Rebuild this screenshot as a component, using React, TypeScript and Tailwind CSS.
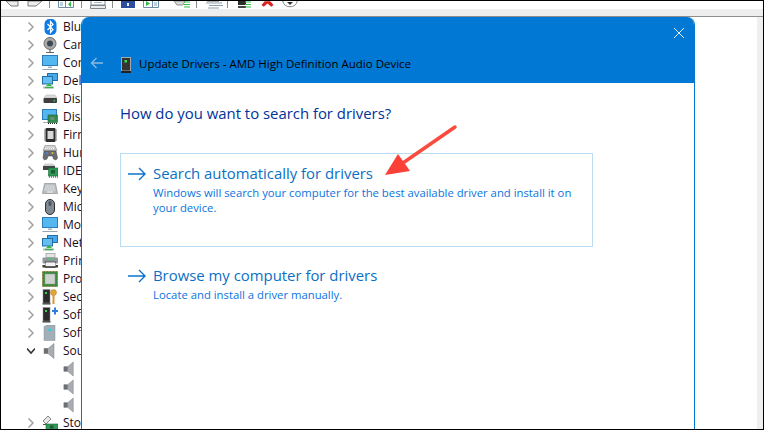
import type { ReactNode } from "react";

const FONT = "font-['Open_Sans','Noto_Sans',sans-serif]";

type IconName =
  | "bluetooth"
  | "camera"
  | "monitor"
  | "network"
  | "disk"
  | "display"
  | "firmware"
  | "hid"
  | "ide"
  | "keyboard"
  | "mouse"
  | "printer"
  | "cpu"
  | "security"
  | "softcomp"
  | "softdev"
  | "speaker"
  | "storage";

type Row = {
  label?: string;
  icon: IconName;
  open?: boolean;
  child?: boolean;
};

const rows: Row[] = [
  { label: "Bluetooth", icon: "bluetooth" },
  { label: "Cameras", icon: "camera" },
  { label: "Computer", icon: "monitor" },
  { label: "Delivery", icon: "network" },
  { label: "Disk drives", icon: "disk" },
  { label: "Display", icon: "display" },
  { label: "Firmware", icon: "firmware" },
  { label: "Human", icon: "hid" },
  { label: "IDE ATA", icon: "ide" },
  { label: "Keyboards", icon: "keyboard" },
  { label: "Mice", icon: "mouse" },
  { label: "Monitors", icon: "monitor" },
  { label: "Network", icon: "network" },
  { label: "Print", icon: "printer" },
  { label: "Processors", icon: "cpu" },
  { label: "Security", icon: "security" },
  { label: "Software", icon: "softcomp" },
  { label: "Software", icon: "softdev" },
  { label: "Sound", icon: "speaker", open: true },
  { icon: "speaker", child: true },
  { icon: "speaker", child: true },
  { icon: "speaker", child: true },
  { label: "Storage", icon: "storage" },
];

const treeIcons: Record<IconName, ReactNode> = {
  bluetooth: (
    <>
      <rect x="2.5" y="0" width="12" height="16" rx="5" fill="#0a7be8" />
      <path d="M5.5 5 11 10.5 8.5 13.5V2.5L11 5.5 5.5 11" fill="none" stroke="#fff" strokeWidth="1.2" />
    </>
  ),
  camera: (
    <>
      <circle cx="8" cy="6.5" r="6" fill="#a9a9a9" stroke="#6e6e6e" />
      <circle cx="8" cy="6.5" r="3" fill="#3a4a55" />
      <path d="M8 13v2M4 15.5h8" stroke="#666" strokeWidth="1.2" />
    </>
  ),
  monitor: (
    <>
      <rect x="0.5" y="0.5" width="15" height="10" fill="#55b7f0" stroke="#2b7fb8" />
      <path d="M6 11.5h4v1.5H6z" fill="#9fb4c2" />
      <path d="M0.5 14.5h15" stroke="#9aa4ad" />
    </>
  ),
  network: (
    <>
      <rect x="5.5" y="0.5" width="10" height="7" fill="#4aa8e8" stroke="#1f6fa8" />
      <rect x="0.5" y="3.5" width="10" height="7.5" fill="#66bdf2" stroke="#1f6fa8" />
      <path d="M1 14.5h11" stroke="#b5bcc2" strokeWidth="2" />
      <path d="M4 13h6l-3-3z" fill="#35b54a" />
      <path d="M3 14.5h8" stroke="#35b54a" strokeWidth="1.4" />
    </>
  ),
  disk: (
    <>
      <path d="M2 7 4 4h9l2 3z" fill="#dcdcdc" stroke="#aaa" strokeWidth="0.5" />
      <rect x="1.5" y="7" width="13.5" height="5" rx="1" fill="#3e3e3e" />
      <rect x="11.5" y="8.8" width="1.6" height="1.6" fill="#37d04f" />
    </>
  ),
  display: (
    <>
      <rect x="0.5" y="0.5" width="14" height="10" fill="#55b7f0" stroke="#2b7fb8" />
      <path d="M1 13.5h7" stroke="#a8b0b6" />
      <rect x="6" y="6" width="9.5" height="7.5" fill="#2f8a4e" stroke="#1d5e33" strokeWidth="0.6" />
      <rect x="8.5" y="8" width="4" height="3" fill="#6b8f70" />
      <path d="M6 14.5h9.5" stroke="#222" strokeDasharray="1 1" />
    </>
  ),
  firmware: (
    <>
      <rect x="3.5" y="1" width="10" height="14" rx="1" fill="#2e2e2e" />
      <rect x="5.5" y="4" width="6" height="8" fill="#d9d9d9" />
      <path d="M2 3h1.5M2 5h1.5M2 7h1.5M2 9h1.5M2 11h1.5M2 13h1.5M13.5 3H15M13.5 5H15M13.5 7H15M13.5 9H15M13.5 11H15M13.5 13H15" stroke="#444" strokeWidth="0.8" />
    </>
  ),
  hid: (
    <>
      <path d="M3 0.5h10l2 5H1z" fill="#c8c8c8" stroke="#8a8a8a" strokeWidth="0.6" />
      <path d="M3.5 2h9M3 3.5h10" stroke="#f2f2f2" strokeDasharray="1 1" />
      <path d="M2 6h12l1.5 7-1.5 2-2.5-1-1-3H6l-1 3-2.5 1L1 13z" fill="#6b6b72" stroke="#3f3f45" strokeWidth="0.5" />
      <circle cx="5" cy="8" r="1" fill="#3c8fe0" />
      <circle cx="10.5" cy="8" r="1" fill="#e0c23c" />
    </>
  ),
  ide: (
    <>
      <path d="M1.5 3 3 1h8l1.5 2z" fill="#dcdcdc" stroke="#aaa" strokeWidth="0.5" />
      <rect x="1" y="3" width="12" height="4" fill="#454545" />
      <rect x="6.5" y="5" width="9.5" height="8" fill="#2f9a55" stroke="#1d6a38" strokeWidth="0.6" />
      <rect x="9" y="7" width="4" height="3.5" fill="#1f5b36" />
      <path d="M7 14h9" stroke="#222" strokeDasharray="1 1" />
    </>
  ),
  keyboard: (
    <>
      <path d="M2.5 2.5h11l2 10H0.5z" fill="#b9bcc0" stroke="#83878c" strokeWidth="0.6" />
      <path d="M3.5 5h9M3 7h10M2.5 9h11" stroke="#f4f4f4" strokeDasharray="1 0.6" />
      <path d="M5 11h6" stroke="#f4f4f4" />
    </>
  ),
  mouse: (
    <>
      <rect x="3.5" y="0.5" width="9" height="15" rx="4.5" fill="#7f8a94" stroke="#2e2e2e" />
      <rect x="6.5" y="2" width="3" height="5" rx="1.5" fill="#4d565e" />
    </>
  ),
  printer: (
    <>
      <rect x="4" y="0.5" width="9" height="4" fill="#e4e4e4" stroke="#888" strokeWidth="0.6" />
      <rect x="0.5" y="4.5" width="15.5" height="6" rx="1" fill="#8f969c" />
      <rect x="6" y="5.5" width="5" height="1" fill="#3bcf6b" />
      <rect x="3.5" y="9" width="10" height="5.5" fill="#fff" stroke="#333" strokeWidth="0.7" />
      <rect x="0.5" y="12" width="15.5" height="2.5" fill="#3a3a3a" />
      <rect x="3.5" y="10" width="10" height="3.2" fill="#f4f4f4" />
    </>
  ),
  cpu: (
    <>
      <rect x="0.5" y="0.5" width="15" height="15" fill="#3b8a3f" stroke="#8a7a35" strokeDasharray="1 0.5" />
      <rect x="3" y="3" width="10" height="10" fill="#cfd3d0" stroke="#8f9a90" strokeWidth="0.5" />
    </>
  ),
  security: (
    <>
      <rect x="1" y="0.5" width="7" height="13.5" fill="#2b2b2b" stroke="#8a8a8a" strokeWidth="0.5" />
      <rect x="3" y="3" width="2" height="2" fill="#37d04f" />
      <rect x="0.5" y="14" width="8" height="1.6" fill="#555" />
      <circle cx="11.5" cy="3.5" r="3" fill="#e0a63a" stroke="#b57d1c" strokeWidth="0.5" />
      <path d="M11.5 5.5v9.5" stroke="#d9992c" strokeWidth="2" />
    </>
  ),
  softcomp: (
    <>
      <rect x="1" y="0.5" width="7" height="13.5" fill="#2b2b2b" stroke="#8a8a8a" strokeWidth="0.5" />
      <rect x="3" y="3" width="2" height="2" fill="#37d04f" />
      <rect x="0.5" y="14" width="8" height="1.6" fill="#555" />
      <path d="M10 3h2V0.5h2V3h2v2h-2v2.5h-2V5h-2z" fill="#2f7fd6" />
    </>
  ),
  softdev: (
    <>
      <path d="M2 1.5 5 0h8v15.5H2z" fill="#a3afb8" stroke="#8a959e" strokeWidth="0.5" />
      <rect x="6.5" y="3.5" width="2.5" height="2.5" fill="#2fd0e6" />
    </>
  ),
  speaker: (
    <>
      <path d="M2 5.5h4L12 0.5v15L6 10.5H2z" fill="#a9adb1" stroke="#7b7f83" strokeWidth="0.5" />
      <path d="M2 5.5h4v5H2z" fill="#6c7074" />
    </>
  ),
  storage: (
    <>
      <path d="M1 6 6 1l3 3-5 5z" fill="#e8e8e8" stroke="#555" strokeWidth="0.7" />
      <path d="M1 9.5h5" stroke="#555" />
      <rect x="4" y="9" width="12" height="6" fill="#2f9a55" stroke="#1d6a38" strokeWidth="0.6" />
      <rect x="8" y="10.5" width="3.5" height="3" fill="#1f5b36" />
    </>
  ),
};

function TreeIcon({ name, small }: { name: IconName; small?: boolean }) {
  return (
    <svg
      aria-hidden="true"
      viewBox="0 0 16 16"
      className={small ? "h-4 w-[15px] shrink-0" : "h-4 w-4 shrink-0"}
    >
      {treeIcons[name]}
    </svg>
  );
}

function TreeRow({ row }: { row: Row }) {
  if (row.child) {
    return (
      <div className="flex h-[18px] items-center">
        <div className="ml-[61px]">
          <TreeIcon name={row.icon} small />
        </div>
      </div>
    );
  }

  return (
    <div className="flex h-[18px] items-center whitespace-nowrap text-[12px] text-[#1a0a20]">
      <svg aria-hidden="true" viewBox="0 0 8 10" className="ml-[26px] h-[10px] w-2 shrink-0">
        {row.open ? (
          <path d="M0 2.5 4 7l4-4.5" fill="none" stroke="#333" strokeWidth="1.5" />
        ) : (
          <path d="M1.5 0.5 6 5l-4.5 4.5" fill="none" stroke="#a2a2a2" strokeWidth="1.5" />
        )}
      </svg>
      <div className="ml-[7px]">
        <TreeIcon name={row.icon} />
      </div>
      <span className="ml-[5px]">{row.label}</span>
    </div>
  );
}

function Toolbar() {
  return (
    <div className="flex h-[8px] shrink-0 items-start overflow-hidden bg-white">
      <svg aria-hidden="true" viewBox="0 0 36 8" className="ml-[5px] h-2 w-9 shrink-0">
        <path d="M0 0 5 5h7V0zM22 0v5h8l6-5z" fill="#ececec" stroke="#7c7c7c" />
      </svg>
      <div className="ml-[7px] h-[7px] w-px bg-[#8a8a8a]" />
      <svg aria-hidden="true" viewBox="0 0 16 8" className="ml-2 h-2 w-4 shrink-0">
        <path d="M0.500 0v6.500h15V0" fill="#fff" stroke="#6f8ca5" />
        <path d="M7.500 0v6" stroke="#6f8ca5" />
        <path d="M2 2h3M2 4h3" stroke="#7aa0c0" />
        <path d="M10 3.500 13 0v6z" fill="#35b54a" />
      </svg>
      <div className="ml-[7px] h-[7px] w-px bg-[#8a8a8a]" />
      <svg aria-hidden="true" viewBox="0 0 16 8" className="ml-2 h-2 w-4 shrink-0">
        <path d="M1 0v4h14V0" fill="#fff" stroke="#7d8790" />
        <path d="M0.500 4.500h15v3H0.500z" fill="#e8eaec" stroke="#7d8790" />
        <path d="M4 1.500h8" stroke="#9db7cc" />
      </svg>
      <div className="ml-[6px] h-[7px] w-px bg-[#8a8a8a]" />
      <svg aria-hidden="true" viewBox="0 0 14 8" className="ml-2 h-2 w-[14px] shrink-0">
        <rect x="0" y="0" width="14" height="7" fill="#2c4d9e" />
        <path d="M6 2h2v3H6z" fill="#e8eefc" />
      </svg>
      <svg aria-hidden="true" viewBox="0 0 16 8" className="ml-2 h-2 w-4 shrink-0">
        <path d="M0.500 0v6.500h15V0" fill="#fff" stroke="#6f8ca5" />
        <path d="M9.500 0v6.500" stroke="#6f8ca5" />
        <path d="M3 0v5l4-2.500z" fill="#35b54a" />
        <path d="M11 2h3M11 4h3" stroke="#7aa0c0" />
      </svg>
      <svg aria-hidden="true" viewBox="0 0 18 8" className="ml-[14px] h-2 w-[18px] shrink-0">
        <path d="M1 0 4 4h6l2-4z" fill="#d9d9d9" stroke="#8f8f8f" />
        <path d="M11 1h6M11 3.500h6M11 6h6" stroke="#35c04a" strokeWidth="1.200" />
      </svg>
      <div className="ml-[5px] h-[7px] w-px bg-[#8a8a8a]" />
      <svg aria-hidden="true" viewBox="0 0 18 8" className="ml-[8px] h-2 w-[18px] shrink-0">
        <path d="M1 2h16M4 4.500h14M3 7h11" stroke="#8fa0ad" />
        <path d="M2 0h12" stroke="#555" />
      </svg>
      <div className="ml-[4px] h-[7px] w-px bg-[#8a8a8a]" />
      <svg aria-hidden="true" viewBox="0 0 14 8" className="ml-[10px] h-2 w-[14px] shrink-0">
        <rect x="0" y="0" width="8" height="4" fill="#2b2b2b" />
        <rect x="0" y="5" width="8" height="2" fill="#444" />
        <path d="M7 1h6M7 3.500h6M7 6h6" stroke="#35c04a" strokeWidth="1.200" />
      </svg>
      <svg aria-hidden="true" viewBox="0 0 14 8" className="ml-[9px] h-2 w-[13px] shrink-0">
        <path d="M4 0 0.500 4 3 6 7 2.500 11 6l2.500-2L10 0z" fill="#d8241f" />
      </svg>
      <svg aria-hidden="true" viewBox="0 0 16 8" className="ml-2 h-2 w-4 shrink-0">
        <path d="M0.700 0a7.500 7.500 0 0 0 14.600 0" fill="#fff" stroke="#8a8a8a" />
        <path d="M5 1h6L8 4z" fill="#333" />
      </svg>
    </div>
  );
}

function OptionArrow() {
  return (
    <svg aria-hidden="true" viewBox="0 0 18 14" className="h-[14px] w-[18px] shrink-0">
      <path d="M0 7h17M11 1l6 6-6 6" fill="none" stroke="#0a74d0" strokeWidth="1.400" />
    </svg>
  );
}

function Option({
  title,
  text,
  boxed,
}: {
  title: string;
  text: ReactNode;
  boxed?: boolean;
}) {
  return (
    <div
      className={
        boxed
          ? "h-[94px] w-[473px] border border-[#b9dcf3] pl-[7px] pr-3 pt-[9px]"
          : "mt-[8px] h-[60px] w-[473px] border border-transparent pl-[7px] pr-3 pt-[9px]"
      }
    >
      <div className="flex h-[22px] items-center gap-[7px]">
        <OptionArrow />
        <span className="pb-[2px] text-[14.9px] leading-[22px] text-[#0a6fc4]">{title}</span>
      </div>
      <p className="ml-[25px] text-[11.3px] leading-[15px] text-[#0a74e0]">{text}</p>
    </div>
  );
}

function Dialog() {
  return (
    <div className="absolute bottom-0 left-[80px] top-[16px] flex w-[614px] flex-col overflow-hidden rounded-t-lg border-x border-[#0078d4] bg-white">
      <header className="relative flex h-[66px] shrink-0 items-end bg-[#0078d4] pb-[10px]">
        <svg aria-hidden="true" viewBox="0 0 14 12" className="mb-[4px] ml-[8px] h-3 w-[14px] shrink-0">
          <path d="M13 6H1.500M6.500 1 1.500 6l5 5" fill="none" stroke="#8db9de" strokeWidth="1.300" />
        </svg>
        <svg aria-hidden="true" viewBox="0 0 10 16" className="ml-[17px] h-4 w-[10px] shrink-0">
          <rect x="0.500" y="0.500" width="9" height="13.500" fill="#333" stroke="#a8a8a8" />
          <rect x="3.500" y="3" width="2.500" height="2.500" fill="#3bdc4f" />
          <rect x="0" y="14" width="10" height="2" fill="#222" />
        </svg>
        <span className="ml-[8px] text-[11.5px] leading-[18px] text-black">
          Update Drivers - AMD High Definition Audio Device
        </span>
        <svg aria-hidden="true" viewBox="0 0 10 10" className="absolute right-[10px] top-[11px] h-[10px] w-[10px]">
          <path d="M0 0l10 10M10 0 0 10" stroke="#fff" strokeWidth="0.900" />
        </svg>
      </header>
      <div className="pl-[38px] pt-[19px]">
        <h1 className="text-[14.9px] leading-[22px] font-normal text-[#003399]">
          How do you want to search for drivers?
        </h1>
        <div className="mt-[29px]">
          <Option
            boxed
            title="Search automatically for drivers"
            text={
              <>
                Windows will search your computer for the best available driver and install it on
                <br />
                your device.
              </>
            }
          />
          <Option title="Browse my computer for drivers" text="Locate and install a driver manually." />
        </div>
      </div>
    </div>
  );
}

export default function App() {
  return (
    <div className={`relative flex h-[430px] w-[764px] flex-col overflow-hidden border border-black bg-white ${FONT}`}>
      <Toolbar />
      <div className="h-[7px] shrink-0 bg-[#eeeeee]" />
      <div className="h-px shrink-0 bg-[#8e8e8e]" />
      <div className="flex min-h-0 flex-1 justify-between">
        <div className="w-[80px] pt-[1px]">
          {rows.map((row, index) => (
            <TreeRow key={index} row={row} />
          ))}
        </div>
        <div className="w-[6px] shrink-0 bg-[#efefef]" />
      </div>
      <Dialog />
      {/* red annotation arrow */}
      <svg aria-hidden="true" viewBox="0 0 764 430" className="pointer-events-none absolute -left-px -top-px h-[430px] w-[764px]">
        <path d="M455 127 400 165" fill="none" stroke="#fa4b3e" strokeWidth="3.500" strokeLinecap="round" />
        <path d="M385 175 398 154 410 171z" fill="#fa4037" />
      </svg>
    </div>
  );
}
